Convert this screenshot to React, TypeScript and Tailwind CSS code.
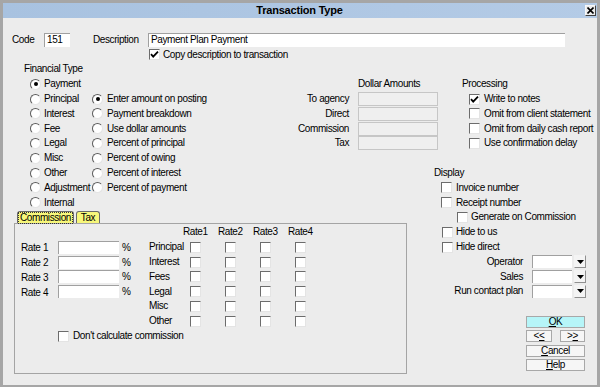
import React from "react";

const ROW = "h-[14.8px] flex items-center whitespace-nowrap";

function Check({ on }: { on?: boolean }) {
  return (
    <span className="w-[11px] h-[11px] shrink-0 bg-white border border-[#e4e4e4] border-t-[#6c6c6c] border-l-[#6c6c6c] flex items-center justify-center">
      {on && (
        <svg width="9" height="9" viewBox="0 0 9 9">
          <path d="M1 4.2 L3.2 6.6 L8 1.6" stroke="#000" strokeWidth="1.8" fill="none" />
        </svg>
      )}
    </span>
  );
}

function Radio({ on }: { on?: boolean }) {
  return (
    <span className="w-[11px] h-[11px] shrink-0 rounded-full bg-white border border-[#e4e4e4] border-t-[#5c5c5c] border-l-[#5c5c5c] flex items-center justify-center">
      {on && <span className="w-[4px] h-[4px] rounded-full bg-black" />}
    </span>
  );
}

function Field({ w, h = 14, children }: { w: string; h?: number; children?: React.ReactNode }) {
  return (
    <div
      className={`${w} ${h === 14 ? "h-[14px]" : "h-[13px]"} shrink-0 bg-white border-t border-l border-[#a0a0a0] flex items-center pl-[2px]`}
    >
      {children}
    </div>
  );
}

function Btn({ label, mn, w = "w-[59px]", ok }: { label: string; mn: number; w?: string; ok?: boolean }) {
  return (
    <div
      className={`${w} h-[12px] flex items-center justify-center border border-[#a8a8a8] ${
        ok ? "bg-[#b6f5f8]" : "bg-[#f6f6f6]"
      }`}
    >
      {label.split("").map((c, i) => (
        <span key={i} className={i === mn ? "underline" : ""}>
          {c}
        </span>
      ))}
    </div>
  );
}

const FIN_LEFT = ["Payment", "Principal", "Interest", "Fee", "Legal", "Misc", "Other", "Adjustment", "Internal"];
const FIN_RIGHT = [
  "Enter amount on posting",
  "Payment breakdown",
  "Use dollar amounts",
  "Percent of principal",
  "Percent of owing",
  "Percent of interest",
  "Percent of payment",
];
const DOLLARS = ["To agency", "Direct", "Commission", "Tax"];
const PROCESSING = [
  { t: "Write to notes", on: true },
  { t: "Omit from client statement" },
  { t: "Omit from daily cash report" },
  { t: "Use confirmation delay" },
];
const RATE_ROWS = ["Principal", "Interest", "Fees", "Legal", "Misc", "Other"];
const RATES = ["Rate1", "Rate2", "Rate3", "Rate4"];

export default function App() {
  return (
    <div className="w-[600px] h-[387px] overflow-hidden bg-[#ececec] border-x-[3px] border-t-[3px] border-b-[2px] border-[#a6a6a6] text-[10px] tracking-[-0.4px] leading-none text-black font-[family-name:'Liberation_Sans',Arial,sans-serif]">
      {/* title bar */}
      <div className="h-[15px] flex items-center bg-[linear-gradient(90deg,#a8c2e0,#b4cbe6)]">
        <div className="w-[11px]" />
        <div className="flex-1 text-center font-bold text-[11px] tracking-[-0.2px]">Transaction Type</div>
        <div className="w-[11px] h-[11px] mr-[1px] bg-[#ececec] border border-[#f8f8f8] border-r-[#404040] border-b-[#404040] flex items-center justify-center">
          <svg width="7" height="7" viewBox="0 0 7 7">
            <path d="M0.5 0.5 L6.5 6.5 M6.5 0.5 L0.5 6.5" stroke="#000" strokeWidth="1.6" />
          </svg>
        </div>
      </div>

      <div className="pt-[14.5px]">
        {/* code / description */}
        <div className={`${ROW} pl-[9px]`}>
          <span className="w-[32px]">Code</span>
          <Field w="w-[26px]">151</Field>
          <span className="ml-[23px] w-[55px]">Description</span>
          <Field w="w-[417px]">Payment Plan Payment</Field>
        </div>
        <div className={`${ROW} pl-[146px]`}>
          <Check on />
          <span className="ml-[3px]">Copy description to transaction</span>
        </div>

        <div className="flex">
          {/* left part */}
          <div className="w-[435px] shrink-0">
            <div className="flex h-[148px]">
              <div className="w-[287px] shrink-0">
                <div className={`${ROW} pl-[21px]`}>Financial Type</div>
                <div className="flex pl-[27px]">
                  <div className="w-[62px] shrink-0">
                    {FIN_LEFT.map((t, i) => (
                      <div key={t} className={ROW}>
                        <Radio on={i === 0} />
                        <span className="ml-[3px]">{t}</span>
                      </div>
                    ))}
                  </div>
                  <div>
                    <div className={ROW} />
                    {FIN_RIGHT.map((t, i) => (
                      <div key={t} className={ROW}>
                        <Radio on={i === 0} />
                        <span className="ml-[4px]">{t}</span>
                      </div>
                    ))}
                  </div>
                </div>
              </div>
              <div className="w-[148px] shrink-0">
                <div className={ROW} />
                <div className={`${ROW} pl-[68px]`}>Dollar Amounts</div>
                {DOLLARS.map((t) => (
                  <div key={t} className={ROW}>
                    <span className="w-[59px] text-right">{t}</span>
                    <div className="ml-[9px] w-[80px] h-[14px] bg-[#efefef] border border-[#c6c6c6]" />
                  </div>
                ))}
              </div>
            </div>

            {/* tabs */}
            <div className="h-[13px] flex items-end pl-[14px]">
              <div className="w-[57px] h-[12px] bg-[#f7f77a] border border-b-0 border-[#6a6a6a] rounded-t-[3px] flex items-center justify-center">
                <span className="px-[1px] outline outline-1 outline-dotted outline-[#333]">Commission</span>
              </div>
              <div className="ml-[2px] w-[24px] h-[12px] bg-[#f7f77a] border border-b-0 border-[#6a6a6a] rounded-t-[3px] flex items-center justify-center">
                Tax
              </div>
            </div>
            <div className="ml-[11px] w-[393px] h-[151px] border border-[#a4a4a4] pt-[1px]">
              <div className="flex">
                <div className="w-[134px] shrink-0 pl-[6px]">
                  <div className={ROW} />
                  {[1, 2, 3, 4].map((n) => (
                    <div key={n} className={ROW}>
                      <span className="w-[37px] pt-[2px]">Rate {n}</span>
                      <Field w="w-[61px]" h={13} />
                      <span className="ml-[3px] pt-[1px]">%</span>
                    </div>
                  ))}
                </div>
                <div>
                  <div className={ROW}>
                    <span className="w-[34px]" />
                    {RATES.map((r) => (
                      <span key={r} className="w-[35px]">
                        {r}
                      </span>
                    ))}
                  </div>
                  {RATE_ROWS.map((t) => (
                    <div key={t} className={ROW}>
                      <span className="w-[34px]">{t}</span>
                      {RATES.map((r) => (
                        <span key={r} className="w-[35px] pl-[7px]">
                          <Check />
                        </span>
                      ))}
                    </div>
                  ))}
                </div>
              </div>
              <div className={`${ROW} pl-[43px]`}>
                <Check />
                <span className="ml-[4px]">Don't calculate commission</span>
              </div>
            </div>
          </div>

          {/* right part */}
          <div className="w-[159px] shrink-0">
            <div className={ROW} />
            <div className={`${ROW} pl-[24px]`}>Processing</div>
            {PROCESSING.map((p) => (
              <div key={p.t} className={`${ROW} pl-[31px]`}>
                <Check on={p.on} />
                <span className="ml-[4px]">{p.t}</span>
              </div>
            ))}
            <div className={ROW} />
            <div className={`${ROW} ml-[-4px]`}>Display</div>
            {["Invoice number", "Receipt number"].map((t) => (
              <div key={t} className={`${ROW} pl-[3px]`}>
                <Check />
                <span className="ml-[4px]">{t}</span>
              </div>
            ))}
            <div className={`${ROW} pl-[19px]`}>
              <Check />
              <span className="ml-[3px]">Generate on Commission</span>
            </div>
            {["Hide to us", "Hide direct"].map((t) => (
              <div key={t} className={`${ROW} pl-[4px]`}>
                <Check />
                <span className="ml-[3px]">{t}</span>
              </div>
            ))}
            {["Operator", "Sales", "Run contact plan"].map((t) => (
              <div key={t} className={ROW}>
                <span className="w-[85px] text-right">{t}</span>
                <div className="ml-[9px] w-[40px] h-[13px] bg-white border-t border-l border-[#a0a0a0]" />
                <div className="ml-[2px] w-[12px] h-[13px] bg-[#f4f4f4] border border-[#f4f4f4] border-r-[#909090] border-b-[#909090] flex items-center justify-center">
                  <svg width="7" height="4" viewBox="0 0 7 4">
                    <path d="M0 0 H7 L3.5 4 Z" fill="#000" />
                  </svg>
                </div>
              </div>
            ))}
            <div className="mt-[17px] pl-[88px] flex flex-col gap-[2.5px]">
              <Btn label="OK" mn={0} ok />
              <div className="flex justify-between w-[59px]">
                <Btn label="<<" mn={1} w="w-[26px]" />
                <Btn label=">>" mn={1} w="w-[25px]" />
              </div>
              <Btn label="Cancel" mn={0} />
              <Btn label="Help" mn={0} />
            </div>
          </div>
        </div>
      </div>
    </div>
  );
}
